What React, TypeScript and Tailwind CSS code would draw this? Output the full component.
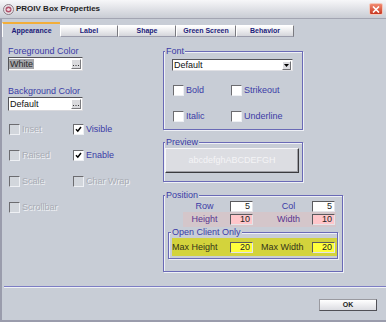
import React from 'react'

const labelBlue = 'text-[#3b3ba6]'

function Check({ checked, disabled }: { checked?: boolean; disabled?: boolean }) {
  return (
    <span
      className={`relative flex items-center justify-center w-[11px] h-[11px] shrink-0 border border-t-[#6c6c70] border-l-[#6c6c70] border-r-[#eef0f4] border-b-[#eef0f4] ${
        disabled ? 'bg-[#d2d6dc]' : 'bg-white'
      }`}
    >
      {checked && (
        <svg width="7" height="7" viewBox="0 0 7 7">
          <path d="M1 3.2 L2.8 5.2 L6 1" stroke="#000" strokeWidth="1.5" fill="none" />
        </svg>
      )}
    </span>
  )
}

function CheckItem({ label, checked, disabled }: { label: string; checked?: boolean; disabled?: boolean }) {
  return (
    <div className="flex items-center gap-[2px] h-[11px]">
      <Check checked={checked} disabled={disabled} />
      <span
        className={`text-[9px] leading-none ${
          disabled ? 'text-[#a8acb4] [text-shadow:1px_1px_0_#f2f3f6]' : labelBlue
        }`}
      >
        {label}
      </span>
    </div>
  )
}

function ColorInput({ value, selected }: { value: string; selected?: boolean }) {
  return (
    <div className="flex items-center w-[75px] h-[14px] bg-white border border-t-[#55555a] border-l-[#55555a] border-r-[#d8d8dc] border-b-[#d8d8dc]">
      <span
        className={`text-[9px] leading-[10px] px-[1px] ${selected ? 'bg-[#a6a7ab] text-[#2b2b2b]' : 'text-[#111]'}`}
      >
        {value}
      </span>
      <span className="ml-auto mr-[1px] flex items-end justify-center pb-[1px] w-[10px] h-[10px] bg-[#dadadd] border border-white border-r-[#7c7c80] border-b-[#7c7c80]">
        <svg width="6" height="2" viewBox="0 0 6 2">
          <rect x="0" y="0" width="1" height="1" fill="#333" />
          <rect x="2.5" y="0" width="1" height="1" fill="#333" />
          <rect x="5" y="0" width="1" height="1" fill="#333" />
        </svg>
      </span>
    </div>
  )
}

function SmallInput({ value, tone }: { value: string; tone: 'white' | 'pink' | 'yellow' }) {
  const bg = tone === 'white' ? 'bg-white' : tone === 'pink' ? 'bg-[#ffc6ca]' : 'bg-[#ffff3c]'
  return (
    <div
      className={`${bg} w-[23px] h-[11px] flex items-center justify-end pr-[2px] border border-t-[#5a5a5e] border-l-[#5a5a5e] border-r-[#e4e4e8] border-b-[#e4e4e8] text-[9px] leading-none text-[#222]`}
    >
      {value}
    </div>
  )
}

function Tab({ label, width, active }: { label: string; width: string; active?: boolean }) {
  if (active) {
    return (
      <div
        className={`${width} h-[15px] flex items-center justify-center pt-[2px] border-t-2 border-t-[#f2ae3a] border-l border-l-white text-[7px] font-bold text-[#1b1b7a]`}
      >
        {label}
      </div>
    )
  }
  return (
    <div
      className={`${width} h-[12px] flex items-center justify-center bg-linear-to-b from-[#ffffff] to-[#d5d6db] border-t border-l border-white border-r border-r-[#7a7a80] border-b border-b-[#9a9cab] text-[7px] font-bold text-[#1b1b7a]`}
    >
      {label}
    </div>
  )
}

const groupBox =
  'border border-[#6a6ab6] shadow-[inset_1px_1px_0_#eef0f6,1px_1px_0_#eef0f6]'
const legendCls = `ml-[1px] px-[1px] bg-[#c8cdd6] text-[9px] leading-[9px] ${labelBlue}`

export default function App() {
  return (
    <div className="w-[386px] h-[322px] flex flex-col overflow-hidden bg-[#c8cdd6] font-['Liberation_Sans',Arial,sans-serif]">
      {/* title bar */}
      <div className="h-[19px] shrink-0 flex items-center px-[3px] bg-linear-to-b from-[#f7f7f9] to-[#c9ccd4] border-b border-[#a3a5b2]">
        <svg width="11" height="11" viewBox="0 0 11 11">
          <circle cx="5.5" cy="5.5" r="5" fill="#e9e2e6" stroke="#8a7c86" strokeWidth="1" />
          <circle cx="5.5" cy="5.5" r="3" fill="#b0506a" />
          <path d="M3.5 5.5 Q5.5 2.5 7.5 5.5 Q5.5 8.5 3.5 5.5" fill="#f0d6de" />
        </svg>
        <span className="ml-[2px] text-[8px] font-bold text-[#1e1e24]">PROIV Box Properties</span>
        <span className="ml-auto w-[14px] h-[12px] flex items-center justify-center rounded-[2px] border border-[#f3c8bc] bg-linear-to-b from-[#f28a70] to-[#c73520]">
          <svg width="8" height="7" viewBox="0 0 8 7">
            <path d="M1 0.5 L7 6.5 M7 0.5 L1 6.5" stroke="#fff" strokeWidth="1.6" />
          </svg>
        </span>
      </div>

      {/* window body */}
      <div className="flex-1 flex flex-col border-l-2 border-b-2 border-[#9a9cac]">
        {/* tabs */}
        <div className="h-[18px] flex items-end">
          <Tab label="Appearance" width="w-[58px]" active />
          <Tab label="Label" width="w-[58px]" />
          <Tab label="Shape" width="w-[58px]" />
          <Tab label="Green Screen" width="w-[60px]" />
          <Tab label="Behavior" width="w-[58px]" />
        </div>

        {/* panel */}
        <div className="h-[249px] flex">
          {/* left column */}
          <div className="w-[161px] pl-[6px] pt-[9px]">
            <div className={`h-[11px] leading-[11px] text-[9px] ${labelBlue}`}>Foreground Color</div>
            <ColorInput value="White" selected />
            <div className={`mt-[15px] h-[11px] leading-[11px] text-[9px] ${labelBlue}`}>Background Color</div>
            <ColorInput value="Default" />
            <div className="mt-[5px] pl-[1px] grid grid-cols-[64px_64px] auto-rows-[26px] items-center">
              <CheckItem label="Inset" disabled />
              <CheckItem label="Visible" checked />
              <CheckItem label="Raised" disabled />
              <CheckItem label="Enable" checked />
              <CheckItem label="Scale" disabled />
              <CheckItem label="Char Wrap" disabled />
              <CheckItem label="Scrollbar" disabled />
            </div>
          </div>

          {/* right column */}
          <div className="w-[180px] pt-[10px]">
            <fieldset className={`w-[140px] h-[83px] ${groupBox}`}>
              <legend className={legendCls}>Font</legend>
              <div className="mt-[3px] ml-[8px] w-[121px] h-[12px] flex items-center bg-white border border-t-[#55555a] border-l-[#55555a] border-r-[#e0e0e4] border-b-[#e0e0e4]">
                <span className="pl-[1px] text-[9px] leading-none text-[#111]">Default</span>
                <span className="ml-auto mr-[1px] w-[9px] h-[9px] flex items-center justify-center bg-[#dcdce0] border border-white border-r-[#707074] border-b-[#707074]">
                  <svg width="5" height="3" viewBox="0 0 5 3">
                    <path d="M0 0 H5 L2.5 3 Z" fill="#000" />
                  </svg>
                </span>
              </div>
              <div className="mt-[14px] ml-[9px] grid grid-cols-[58px_58px] gap-y-[15px]">
                <CheckItem label="Bold" />
                <CheckItem label="Strikeout" />
                <CheckItem label="Italic" />
                <CheckItem label="Underline" />
              </div>
            </fieldset>

            <fieldset className={`mt-[8px] w-[140px] h-[44px] ${groupBox}`}>
              <legend className={legendCls}>Preview</legend>
              <div className="mt-[1px] ml-[1px] w-[134px] h-[25px] flex items-center justify-center bg-[#dcdde2] border border-t-[#f6f6f8] border-l-[#f6f6f8] border-r-[#3a3a3e] border-b-[#3a3a3e] shadow-[inset_-1px_-1px_0_#a0a0a6] text-[9px] text-[#f4f4f6]">
                abcdefghABCDEFGH
              </div>
            </fieldset>

            <fieldset className={`mt-[9px] w-[180px] h-[81px] ${groupBox}`}>
              <legend className={legendCls}>Position</legend>
              <div className="mt-[1px] ml-[19px] w-[153px] h-[11px] flex items-center">
                <span className={`w-[43px] text-center text-[9px] leading-none ${labelBlue}`}>Row</span>
                <span className="ml-[4px]">
                  <SmallInput value="5" tone="white" />
                </span>
                <span className={`ml-[12px] w-[47px] text-center text-[9px] leading-none ${labelBlue}`}>Col</span>
                <SmallInput value="5" tone="white" />
              </div>
              <div className="ml-[19px] w-[153px] h-[15px] flex items-center bg-[#d4c6ca]">
                <span className="w-[43px] text-center text-[9px] leading-none text-[#5a3490]">Height</span>
                <span className="ml-[4px]">
                  <SmallInput value="10" tone="pink" />
                </span>
                <span className="ml-[12px] w-[47px] text-center text-[9px] leading-none text-[#5a3490]">Width</span>
                <SmallInput value="10" tone="pink" />
              </div>
              <fieldset className={`mt-[1px] ml-[4px] w-[170px] h-[31px] ${groupBox}`}>
                <legend className={`ml-[2px] px-[1px] bg-[#c8cdd6] text-[9px] leading-[9px] ${labelBlue}`}>
                  Open Client Only
                </legend>
                <div className="mt-[1px] ml-[3px] w-[165px] h-[18px] flex items-center bg-[#d3d33c]">
                  <span className="w-[58px] text-[9px] leading-none text-[#34341a]">Max Height</span>
                  <SmallInput value="20" tone="yellow" />
                  <span className="ml-[8px] w-[51px] text-[9px] leading-none text-[#34341a]">Max Width</span>
                  <SmallInput value="20" tone="yellow" />
                </div>
              </fieldset>
            </fieldset>
          </div>
        </div>

        {/* separator */}
        <div className="ml-[2px] h-[2px] border-t border-t-[#7d7dc4] border-b border-b-[#f0f2f6]" />

        {/* footer */}
        <div className="h-[32px] flex justify-end pt-[11px] pr-[9px]">
          <button className="w-[58px] h-[12px] flex items-center justify-center bg-linear-to-b from-[#ffffff] to-[#dcdde2] border border-[#9a9aa0] border-r-[#505056] border-b-[#505056] text-[7px] font-bold text-[#222]">
            OK
          </button>
        </div>
      </div>
    </div>
  )
}
